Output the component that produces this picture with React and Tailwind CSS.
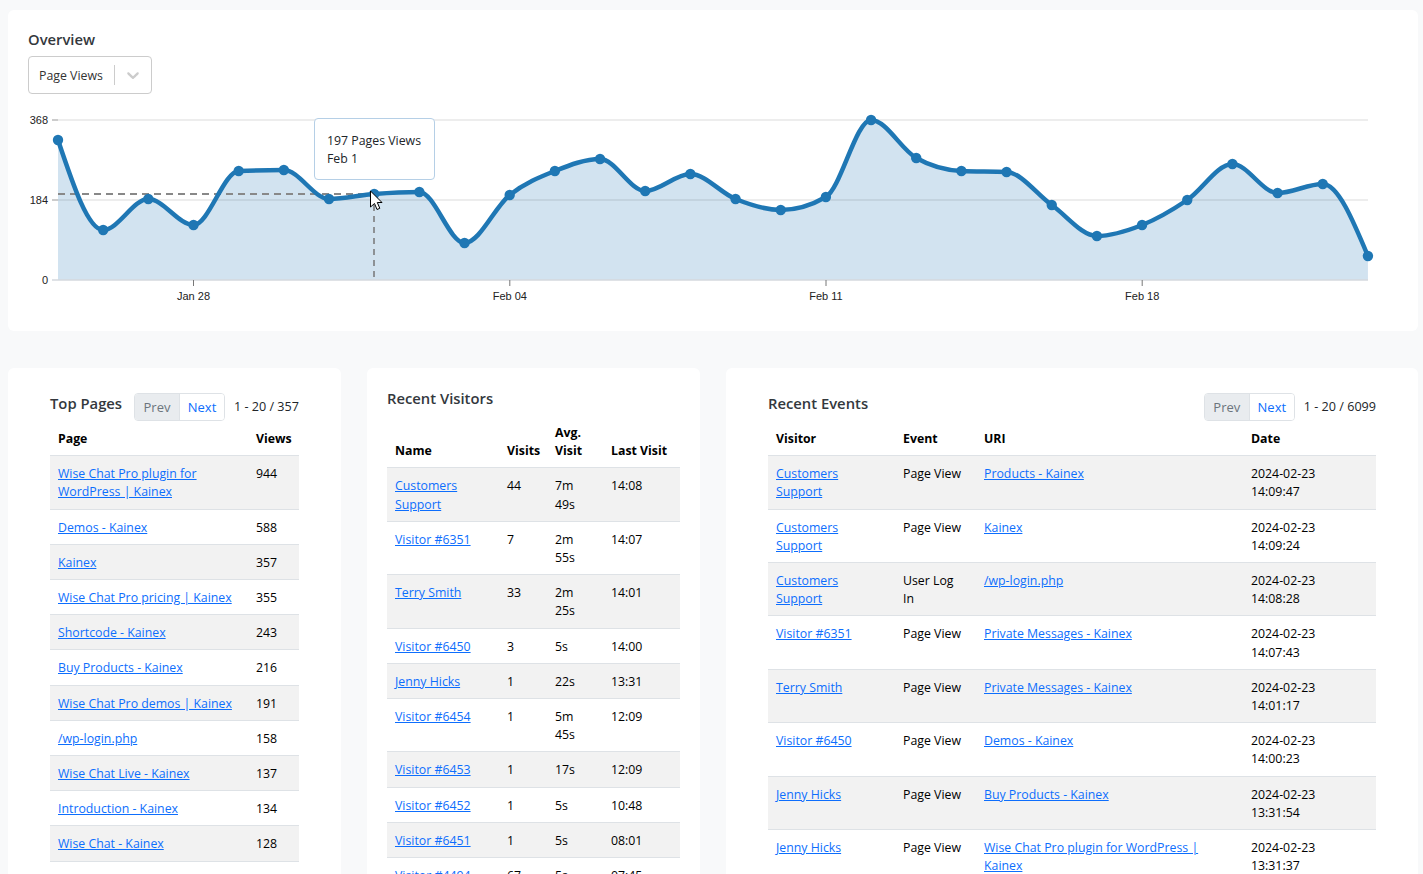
const X0 = 58;
const STEP = 45.17;
const YS = [140, 230, 199, 225, 171, 170, 199, 194, 192, 243, 195, 171, 159, 191, 174, 199, 210, 197, 120, 158, 171, 172, 205, 236, 225, 200, 164, 193, 184, 256];
const pts = YS.map((y, i) => [X0 + i * STEP, y]);

// monotone-x curve through the points
function linePath(p, h) {
  const s = p.slice(1).map((q, i) => (q[1] - p[i][1]) / h);
  const t = p.map((_, i) => {
    if (i === 0 || i === p.length - 1) return 0;
    const a = s[i - 1];
    const b = s[i];
    return (Math.sign(a) + Math.sign(b)) * Math.min(Math.abs(a), Math.abs(b), 0.5 * Math.abs((a + b) / 2)) || 0;
  });
  t[0] = (3 * s[0] - t[1]) / 2;
  t[p.length - 1] = (3 * s[s.length - 1] - t[p.length - 2]) / 2;
  let d = `M${p[0][0]},${p[0][1]}`;
  for (let i = 0; i < p.length - 1; i++) {
    const [x0, y0] = p[i];
    const [x1, y1] = p[i + 1];
    d += `C${x0 + h / 3},${y0 + (h / 3) * t[i]} ${x1 - h / 3},${y1 - (h / 3) * t[i + 1]} ${x1},${y1}`;
  }
  return d;
}

const line = linePath(pts, STEP);
const area = `${line}L${pts[pts.length - 1][0]},280L${X0},280Z`;

function Chart() {
  return (
    <div className="relative mt-[11px] h-[210px] w-[1370px]">
      <svg width="1370" height="210" viewBox="28 105 1370 210" className="block">
        <path d={area} fill="#d2e3f0" />
        {[120, 200].map((y) => (
          <g key={y}>
            <line x1="58" x2="1368" y1={y} y2={y} stroke="#000" strokeOpacity="0.07" strokeWidth="2" />
            <line x1="52" x2="58" y1={y} y2={y} stroke="#999" />
          </g>
        ))}
        <line x1="52" x2="1368" y1="280" y2="280" stroke="#d4d9de" strokeWidth="1.5" />
        <g fontFamily="'Liberation Sans', Arial, sans-serif" fontSize="11" fill="#222">
          <text x="48" y="124" textAnchor="end">368</text>
          <text x="48" y="204" textAnchor="end">184</text>
          <text x="48" y="284" textAnchor="end">0</text>
          {[[193.5, "Jan 28"], [509.8, "Feb 04"], [826, "Feb 11"], [1142.2, "Feb 18"]].map(([x, t]) => (
            <g key={t}>
              <line x1={x} x2={x} y1="280" y2="286" stroke="#777" />
              <text x={x} y="300" textAnchor="middle">{t}</text>
            </g>
          ))}
        </g>
        <line x1="58" x2="374" y1="194" y2="194" stroke="#888" strokeWidth="2" strokeDasharray="7 5" />
        <line x1="374" x2="374" y1="194" y2="280" stroke="#777" strokeWidth="1.5" strokeDasharray="6 5" />
        <path d={line} fill="none" stroke="#1f77b4" strokeWidth="4.5" strokeLinecap="round" />
        {pts.map(([x, y]) => (
          <circle key={x} cx={x} cy={y} r="5.2" fill="#1f77b4" />
        ))}
        <path d="M370.5 191V207L374.5 203.5L377 209.5L379.8 208.3L377.3 202.5H382Z" fill="#fff" stroke="#000" strokeWidth="1" />
      </svg>
      <div className="absolute left-[286px] top-[13px] h-[62px] w-[121px] rounded border border-[#b5cfe6] bg-white pl-[12px] pt-[13px] text-[12.32px] leading-[18px] text-[#212529]">
        <div>197 Pages Views</div>
        <div>Feb 1</div>
      </div>
    </div>
  );
}

function Pager({ range }) {
  return (
    <div className="flex items-center">
      <div className="flex h-[28px] overflow-hidden rounded border border-[#dee2e6] text-[13px] leading-[26px]">
        <span className="w-[44px] bg-[#e9ecef] text-center text-[#6c757d]">Prev</span>
        <span className="w-[45px] border-l border-[#dee2e6] bg-white text-center text-[#0d6efd]">Next</span>
      </div>
      <span className="ml-[9px] text-[12.6px] text-[#212529]">{range}</span>
    </div>
  );
}

function Table({ widths, head, rows, links }) {
  return (
    <table className="w-full table-fixed border-collapse text-[12.32px] leading-[18.2px] text-black">
      <colgroup>
        {widths.map((w, i) => (
          <col key={i} style={{ width: w }} />
        ))}
      </colgroup>
      <thead>
        <tr className="border-b border-[#dee2e6]">
          {head.map((h) => (
            <th key={h} className="whitespace-pre-line px-2 pb-[7px] pt-[9px] text-left align-bottom font-bold">{h}</th>
          ))}
        </tr>
      </thead>
      <tbody>
        {rows.map((r, i) => (
          <tr key={i} className={`border-b border-[#dee2e6] ${i % 2 === 0 ? "bg-[#f2f2f2]" : "bg-white"}`}>
            {r.map((c, j) => (
              <td key={j} className="whitespace-pre-line px-2 pb-[7px] pt-[9px] align-top">
                {links.includes(j) ? <a href="#" className="text-[#0d6efd] underline">{c}</a> : c}
              </td>
            ))}
          </tr>
        ))}
      </tbody>
    </table>
  );
}

const pages = [
  ["Wise Chat Pro plugin for\nWordPress | Kainex", "944"],
  ["Demos - Kainex", "588"],
  ["Kainex", "357"],
  ["Wise Chat Pro pricing | Kainex", "355"],
  ["Shortcode - Kainex", "243"],
  ["Buy Products - Kainex", "216"],
  ["Wise Chat Pro demos | Kainex", "191"],
  ["/wp-login.php", "158"],
  ["Wise Chat Live - Kainex", "137"],
  ["Introduction - Kainex", "134"],
  ["Wise Chat - Kainex", "128"],
];

const visitors = [
  ["Customers\nSupport", "44", "7m\n49s", "14:08"],
  ["Visitor #6351", "7", "2m\n55s", "14:07"],
  ["Terry Smith", "33", "2m\n25s", "14:01"],
  ["Visitor #6450", "3", "5s", "14:00"],
  ["Jenny Hicks", "1", "22s", "13:31"],
  ["Visitor #6454", "1", "5m\n45s", "12:09"],
  ["Visitor #6453", "1", "17s", "12:09"],
  ["Visitor #6452", "1", "5s", "10:48"],
  ["Visitor #6451", "1", "5s", "08:01"],
  ["Visitor #4494", "67", "5s", "07:45"],
];

const events = [
  ["Customers\nSupport", "Page View", "Products - Kainex", "2024-02-23\n14:09:47"],
  ["Customers\nSupport", "Page View", "Kainex", "2024-02-23\n14:09:24"],
  ["Customers\nSupport", "User Log\nIn", "/wp-login.php", "2024-02-23\n14:08:28"],
  ["Visitor #6351", "Page View", "Private Messages - Kainex", "2024-02-23\n14:07:43"],
  ["Terry Smith", "Page View", "Private Messages - Kainex", "2024-02-23\n14:01:17"],
  ["Visitor #6450", "Page View", "Demos - Kainex", "2024-02-23\n14:00:23"],
  ["Jenny Hicks", "Page View", "Buy Products - Kainex", "2024-02-23\n13:31:54"],
  ["Jenny Hicks", "Page View", "Wise Chat Pro plugin for WordPress |\nKainex", "2024-02-23\n13:31:37"],
];

export default function App() {
  return (
    <div className="h-[874px] overflow-hidden bg-[#f8f9fa] px-[8px] pt-[10px] font-['Open_Sans','Noto_Sans',sans-serif]">
      <section className="h-[321px] w-[1410px] rounded-md bg-white px-[20px] pt-[19px]">
        <h2 className="text-[14.8px] font-semibold leading-[20px] text-[#33383d]">Overview</h2>
        <div className="mt-[7px] flex h-[38px] w-[124px] items-center rounded border border-[#ccc] pl-[10px] pt-[2px] text-[12.32px] text-[#333]">
          <span className="w-[75px]">Page Views</span>
          <span className="-mt-[2px] h-[20px] w-px bg-[#ccc]" />
          <svg width="20" height="20" viewBox="0 0 20 20" className="-mt-[2px] ml-[8px] text-[#ccc]" fill="currentColor">
            <path d="M4.516 7.548c.436-.446 1.043-.481 1.576 0L10 11.295l3.908-3.747c.533-.481 1.141-.446 1.574 0 .436.445.408 1.197 0 1.615-.406.418-4.695 4.502-4.695 4.502a1.095 1.095 0 0 1-1.576 0S4.924 9.581 4.516 9.163c-.409-.418-.436-1.17 0-1.615z" />
          </svg>
        </div>
        <Chart />
      </section>
      <div className="mt-[37px] grid w-[1410px] grid-cols-[333px_333px_692px] gap-[26px]">
        <section className="h-[600px] rounded-md bg-white px-[42px] pt-[25px]">
          <div className="flex h-[28px]">
            <h2 className="w-[84px] text-[14.8px] font-semibold leading-[20px] text-[#33383d]">Top Pages</h2>
            <Pager range="1 - 20 / 357" />
          </div>
          <Table widths={["198px", "51px"]} head={["Page", "Views"]} rows={pages} links={[0]} />
        </section>
        <section className="h-[600px] rounded-md bg-white px-[20px] pt-[20px]">
          <h2 className="h-[27px] text-[14.8px] font-semibold leading-[20px] text-[#33383d]">Recent Visitors</h2>
          <Table widths={["112px", "48px", "56px", "77px"]} head={["Name", "Visits", "Avg.\nVisit", "Last Visit"]} rows={visitors} links={[0]} />
        </section>
        <section className="h-[600px] rounded-md bg-white px-[42px] pt-[25px]">
          <div className="flex h-[28px] justify-between">
            <h2 className="text-[14.8px] font-semibold leading-[20px] text-[#33383d]">Recent Events</h2>
            <Pager range="1 - 20 / 6099" />
          </div>
          <Table widths={["127px", "81px", "267px", "133px"]} head={["Visitor", "Event", "URI", "Date"]} rows={events} links={[0, 2]} />
        </section>
      </div>
    </div>
  );
}
